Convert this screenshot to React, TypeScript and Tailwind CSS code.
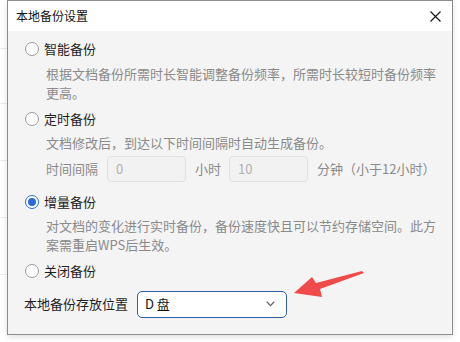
import React from "react";

const font = { fontFamily: '"Noto Sans CJK SC", "Noto Sans", sans-serif' };

function Radio({ checked }: { checked?: boolean }) {
  return checked ? (
    <div className="w-[14px] h-[14px] rounded-full border border-[#2b6bd6] bg-white flex items-center justify-center shrink-0">
      <div className="w-[8px] h-[8px] rounded-full bg-[#2b6bd6]" />
    </div>
  ) : (
    <div className="w-[14px] h-[14px] rounded-full border border-[#9a9a9a] bg-white shrink-0" />
  );
}

function Option({ label, checked, className }: { label: string; checked?: boolean; className?: string }) {
  return (
    <div className={"flex items-center h-[20px] gap-[5px] " + (className ?? "")}>
      <Radio checked={checked} />
      <span className="text-[13px] leading-[20px] text-[#1e1e1e]">{label}</span>
    </div>
  );
}

export default function App() {
  return (
    <div className="relative w-[460px] h-[342px] bg-white overflow-hidden" style={font}>
      <div className="absolute left-0 top-0 w-[8px] h-full">
        <div className="absolute left-0 w-full top-[48px] h-px bg-[#ececec]" />
        <div className="absolute left-0 w-full top-[103px] h-px bg-[#ececec]" />
        <div className="absolute left-0 w-full top-[160px] h-px bg-[#ececec]" />
        <div className="absolute left-0 w-full top-[217px] h-px bg-[#ececec]" />
        <div className="absolute left-0 w-full top-[274px] h-px bg-[#ececec]" />
      </div>
      <div className="relative ml-[7px] w-[446px] h-[335px] border border-[#8c8c8c] flex flex-col shadow-[0_2px_6px_rgba(0,0,0,0.12)]">
        <div className="h-[30px] bg-white flex items-center justify-between pl-[8px] pr-[11px] shrink-0">
          <span className="text-[12px] leading-[16px] text-[#111]">本地备份设置</span>
          <svg width="11" height="11" viewBox="0 0 11 11" className="mt-[1px]">
            <path d="M0.5 0.5 L10.5 10.5 M10.5 0.5 L0.5 10.5" stroke="#111" strokeWidth="1.1" />
          </svg>
        </div>
        <div className="flex-1 bg-[#f4f4f4] pl-[17px] relative">
          <Option label="智能备份" className="mt-[8px]" />
          <div className="ml-[21px] w-[394px] mt-[5px] text-[13px] leading-[19px] text-[#8a8a8a]">
            根据文档备份所需时长智能调整备份频率，所需时长较短时备份频率更高。
          </div>
          <Option label="定时备份" className="mt-[7px]" />
          <div className="ml-[21px] mt-[4px] text-[13px] leading-[19px] text-[#8a8a8a]">
            文档修改后，到达以下时间间隔时自动生成备份。
          </div>
          <div className="ml-[21px] mt-[4px] flex items-center h-[26px] text-[13px] text-[#8a8a8a]">
            <span>时间间隔</span>
            <div className="ml-[9px] w-[79px] h-[26px] rounded-[4px] border border-[#e0e0e0] bg-[#f2f2f2] flex items-center pl-[8px] text-[#b0b0b0]">0</div>
            <span className="ml-[9px]">小时</span>
            <div className="ml-[8px] w-[79px] h-[26px] rounded-[4px] border border-[#e0e0e0] bg-[#f2f2f2] flex items-center pl-[8px] text-[#b0b0b0]">10</div>
            <span className="ml-[9px]">分钟（小于12小时）</span>
          </div>
          <Option label="增量备份" checked className="mt-[10px]" />
          <div className="ml-[21px] w-[394px] mt-[4px] text-[13px] leading-[19px] text-[#8a8a8a]">
            对文档的变化进行实时备份，备份速度快且可以节约存储空间。此方案需重启WPS后生效。
          </div>
          <Option label="关闭备份" className="mt-[7px]" />
          <div className="-ml-[1px] mt-[10px] flex items-center h-[26px]">
            <span className="text-[13px] text-[#1e1e1e]">本地备份存放位置</span>
            <div className="ml-[9px] w-[150px] h-[27px] rounded-[5px] border border-[#2c5ea8] bg-white flex items-center justify-between pl-[7px] pr-[11px]">
              <span className="text-[13px] text-[#111]">D 盘</span>
              <svg width="9" height="6" viewBox="0 0 9 6">
                <path d="M0.8 0.8 L4.5 4.6 L8.2 0.8" fill="none" stroke="#666" strokeWidth="1.3" />
              </svg>
            </div>
          </div>
          <svg className="absolute left-0 top-0 pointer-events-none" width="446" height="303" viewBox="0 0 446 303">
            <g transform="translate(-8,-31)">
              <polygon points="294,293 312,277 316,283 362,271 364,273 320,289 322,297" fill="#f04a4a" />
            </g>
          </svg>
        </div>
      </div>
    </div>
  );
}
